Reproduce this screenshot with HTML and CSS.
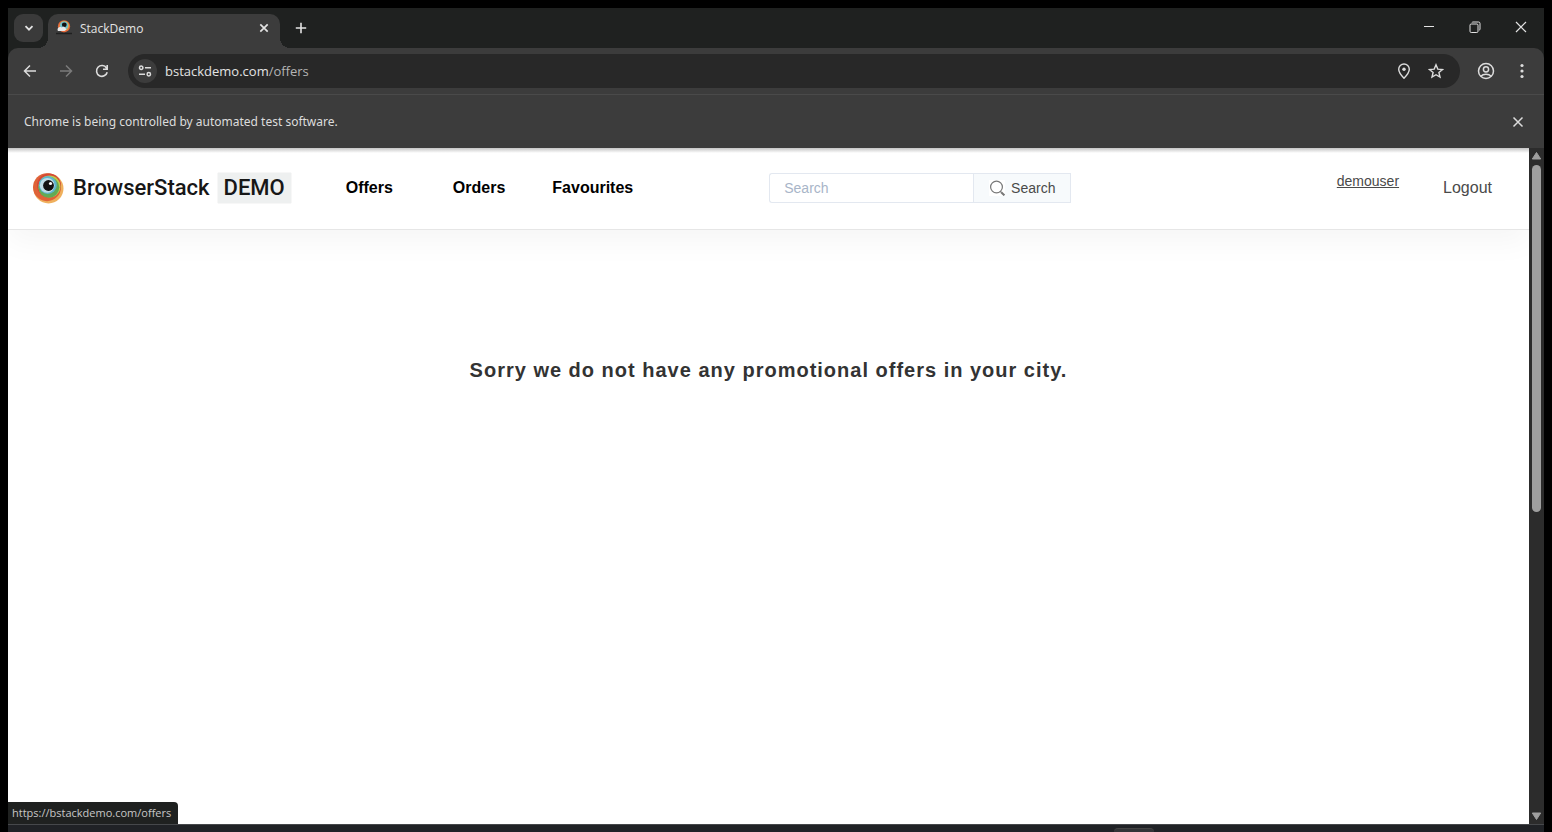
FILE: index.html
```html
<!DOCTYPE html>
<html lang="en">
<head>
<meta charset="utf-8">
<title>StackDemo</title>
<link rel="stylesheet" href="styles.css">
</head>
<body>
<div class="window">
  <div class="tabstrip">
    <button class="tab-search" aria-label="Search tabs"><svg width="12" height="12" viewBox="0 0 12 12"><path d="M2.5 4.2 6 7.7 9.5 4.2" fill="none" stroke="#e3e3e3" stroke-width="1.8"/></svg></button>
    <div class="tab">
      <svg class="favicon" width="16" height="16" viewBox="0 0 16 16"><circle cx="8" cy="6.3" r="6.1" fill="#e5673a"/><circle cx="8.3" cy="5.8" r="4.8" fill="#d9a94a"/><circle cx="8" cy="5.5" r="4" fill="#6fc0cc"/><circle cx="8.3" cy="4.8" r="2.4" fill="#111"/><path d="M1.500 10c0-2.500 2-3.500 4-2.500L8 6.500l2.500 3-2 1.500H2z" fill="#e8e8e8"/><path d="M0 13.500h16" stroke="#202020" stroke-width="1.500"/></svg>
      <span class="tab-title">StackDemo</span>
      <button class="tab-close" aria-label="Close tab"><svg width="10" height="10" viewBox="0 0 10 10"><path d="m1.300 1.300 7.400 7.400m0-7.400L1.300 8.700" stroke="#e3e3e3" stroke-width="1.700"/></svg></button>
    </div>
    <button class="tab-new" aria-label="New tab"><svg width="12" height="12" viewBox="0 0 12 12"><path d="M6 .8v10.400M.8 6h10.400" stroke="#e3e3e3" stroke-width="1.600"/></svg></button>
    <div class="window-buttons">
      <button aria-label="Minimize"><svg width="12" height="12" viewBox="0 0 12 12"><path d="M1 5.500h10" stroke="#e3e3e3"/></svg></button>
      <button aria-label="Restore"><svg width="12" height="12" viewBox="0 0 12 12"><rect x="1" y="3" width="8" height="8.500" rx="1.200" fill="none" stroke="#e3e3e3"/><path d="M3 1.500Q3 1 4 1h5.500Q11 1 11 2.500V8q0 1-.8 1.300" fill="none" stroke="#e3e3e3"/></svg></button>
      <button aria-label="Close"><svg width="12" height="12" viewBox="0 0 12 12"><path d="m1 1 10 10M11 1 1 11" stroke="#e3e3e3" stroke-width="1.200"/></svg></button>
    </div>
  </div>
  <div class="toolbar">
    <div class="history">
      <button aria-label="Back"><svg width="14" height="14" viewBox="0 0 14 14"><path d="M13 7H1.800M7 1.500 1.500 7 7 12.500" fill="none" stroke="#dcdcdc" stroke-width="1.500"/></svg></button>
      <button aria-label="Forward" disabled><svg width="14" height="14" viewBox="0 0 14 14"><path d="M1 7h11.200M7 1.500 12.500 7 7 12.500" fill="none" stroke="#7b7b7b" stroke-width="1.500"/></svg></button>
      <button aria-label="Reload"><svg width="14" height="14" viewBox="0 0 14 14"><path d="M12.200 8.200A5.400 5.400 0 1 1 11.500 4L12 4.800M12.200 1v4.300H8" fill="none" stroke="#dcdcdc" stroke-width="1.600"/></svg></button>
    </div>
    <div class="omnibox">
      <button class="site-info" aria-label="View site information"><svg width="14" height="14" viewBox="0 0 14 14"><g fill="none" stroke="#dcdcdc" stroke-width="1.500"><circle cx="3.200" cy="3.700" r="1.700"/><path d="M7 3.700h6M1 10.300h6"/><circle cx="10.800" cy="10.300" r="1.700"/></g></svg></button>
      <span class="url">bstackdemo.com<span class="url-path">/offers</span></span>
      <button class="omni-icon" aria-label="Location"><svg width="16" height="16" viewBox="0 0 16 16"><path d="M8 15.300C4.800 12 2.700 9.200 2.700 6.300a5.300 5.300 0 0 1 10.600 0C13.300 9.200 11.200 12 8 15.300z" fill="none" stroke="#dcdcdc" stroke-width="1.400"/><circle cx="8" cy="6.200" r="1.700" fill="#dcdcdc"/></svg></button>
      <button class="omni-icon" aria-label="Bookmark"><svg width="16" height="16" viewBox="0 0 16 16"><path d="m8 1.800 1.800 4.300 4.700.4-3.600 3 1.100 4.600L8 11.700l-4 2.400 1.100-4.600-3.600-3 4.700-.4z" fill="none" stroke="#dcdcdc" stroke-width="1.400"/></svg></button>
    </div>
    <button class="bar-icon profile" aria-label="Profile"><svg width="18" height="18" viewBox="0 0 18 18"><g fill="none" stroke="#dcdcdc" stroke-width="1.500"><circle cx="9" cy="9" r="7.500"/><circle cx="9" cy="7.300" r="2.600"/><path d="M3.800 14.300c2.500-2.700 7.900-2.700 10.400 0"/></g></svg></button>
    <button class="bar-icon" aria-label="Menu"><svg width="16" height="16" viewBox="0 0 16 16" fill="#dcdcdc"><circle cx="8" cy="2.500" r="1.600"/><circle cx="8" cy="8" r="1.600"/><circle cx="8" cy="13.500" r="1.600"/></svg></button>
  </div>
  <div class="infobar">
    <span>Chrome is being controlled by automated test software.</span>
    <button aria-label="Dismiss"><svg width="12" height="12" viewBox="0 0 12 12"><path d="m1.500 1.500 9 9m0-9-9 9" stroke="#dcdcdc" stroke-width="1.500"/></svg></button>
  </div>
  <div class="viewport">
    <div class="page">
      <header class="site-header">
        <a class="brand" href="#">
          <svg width="32" height="32" viewBox="0 0 32 32"><circle cx="16.500" cy="16.500" r="15" fill="#efb05d"/><circle cx="15" cy="15.200" r="14" fill="#df6338"/><circle cx="17" cy="13.500" r="12" fill="#d44838"/><circle cx="17.500" cy="14.500" r="11" fill="#bdca48"/><circle cx="16.800" cy="15.300" r="10.500" fill="#63aa55"/><circle cx="15.800" cy="13" r="9" fill="#5fb6cf"/><circle cx="15.200" cy="13.300" r="7.400" fill="#c0dde7"/><circle cx="16.500" cy="13.500" r="5.400" fill="#121212"/><circle cx="18.500" cy="11.500" r="1.600" fill="#fff"/></svg>
          <span class="brand-name">BrowserStack</span>
          <span class="brand-tag">DEMO</span>
        </a>
        <nav class="links">
          <a class="link-offers" href="#">Offers</a>
          <a class="link-orders" href="#">Orders</a>
          <a href="#">Favourites</a>
        </nav>
        <form class="search">
          <input type="text" placeholder="Search" aria-label="Search">
          <button type="button"><svg width="16" height="16" viewBox="0 0 16 16"><path d="M0 0h16v16H0z" fill="#fff"/><circle cx="7.500" cy="7" r="5.900" fill="none" stroke="#777" stroke-width="1.200"/><path d="m11.300 11.300 1 1" stroke="#777" stroke-width="1.200"/><path d="m12.200 12.200 3.200 3.200" stroke="#777" stroke-width="2"/></svg>Search</button>
        </form>
        <div class="account">
          <a class="user" href="#">demouser</a>
          <a class="logout" href="#">Logout</a>
        </div>
      </header>
      <main class="offers"><h1>Sorry we do not have any promotional offers in your city.</h1></main>
      <div class="status">https://bstackdemo.com/offers</div>
    </div>
    <div class="scrollbar">
      <svg width="11" height="10" viewBox="0 0 11 10"><path d="M5.500 1.500 9.700 8H1.300z" fill="#9f9f9f" stroke="#9f9f9f" stroke-linejoin="round"/></svg>
      <div class="track"><div class="thumb"></div></div>
      <svg width="11" height="10" viewBox="0 0 11 10"><path d="M5.500 8.500 9.700 2H1.300z" fill="#9f9f9f" stroke="#9f9f9f" stroke-linejoin="round"/></svg>
    </div>
  </div>
  <div class="taskbar"><div class="taskbar-item"></div></div>
</div>
</body>
</html>
```
FILE: styles.css
```css
* { box-sizing: border-box; }
body { margin: 0; background: #000; font-family: "Noto Sans", sans-serif; }
button { border: 0; padding: 0; background: none; font: inherit; display: flex; align-items: center; justify-content: center; flex: none; }
a { color: inherit; text-decoration: none; }
svg { display: block; flex: none; }

.window { min-height: 100vh; padding: 8px 8px 0; display: flex; flex-direction: column; }

.tabstrip { position: relative; z-index: 1; height: 40px; background: #1f2120; display: flex; padding-left: 6px; color: #e3e3e3; font-size: 12px; }
.tab-search { width: 29px; height: 28px; margin-top: 6px; border-radius: 9px; background: #3a3a3a; }
.tab { position: relative; width: 232px; height: 34px; margin: 6px 0 0 5px; padding: 0 10px 6px 8px; border-radius: 10px 10px 0 0; background: #3c3c3c; display: flex; align-items: center; }
.tab::before, .tab::after { content: ""; position: absolute; bottom: 0; width: 10px; height: 10px; }
.tab::before { left: -10px; background: radial-gradient(circle at 0 0, transparent 10px, #3c3c3c 10px); }
.tab::after { right: -10px; background: radial-gradient(circle at 100% 0, transparent 10px, #3c3c3c 10px); }
.tab-title { flex: 1; margin-left: 8px; font-family: "Open Sans", sans-serif; }
.tab-close { width: 12px; height: 16px; }
.tab-new { width: 28px; height: 28px; margin: 6px 0 0 7px; }
.window-buttons { margin-left: auto; display: flex; }
.window-buttons button { width: 46px; height: 38px; }

.toolbar { position: relative; height: 46px; padding: 0 8px; border-radius: 10px 10px 0 0; background: #3c3c3c; display: flex; align-items: center; }
.toolbar::before { content: ""; position: absolute; inset: 0 0 auto; height: 10px; z-index: -1; background: #1f2120; }
.history { display: flex; gap: 8px; }
.history button { width: 28px; height: 28px; }
.omnibox { flex: 1; height: 34px; margin-left: 12px; padding: 0 12px 0 5px; border-radius: 17px; background: #282828; display: flex; align-items: center; }
.site-info { width: 24px; height: 24px; border-radius: 50%; background: #3c3c3c; }
.url { flex: 1; margin-left: 8px; color: #e3e3e3; font: 13px/20px "Open Sans", sans-serif; }
.url-path { color: #b4b4b4; }
.omni-icon { width: 24px; height: 24px; margin-left: 8px; }
.bar-icon { width: 28px; height: 28px; }
.profile { margin: 0 8px 0 12px; }

.infobar { height: 54px; padding: 0 20px 0 16px; border-top: 1px solid #4a4a4a; background: #3c3c3c; color: #dcdcdc; font-size: 12px; display: flex; align-items: center; justify-content: space-between; }

.viewport { flex: 1; display: flex; background: #fff; }
.page { position: relative; flex: 1; overflow: hidden; display: flex; flex-direction: column; font-family: "Liberation Sans", sans-serif; background: linear-gradient(#c4c4c4, #fff 5px); }
.site-header { min-height: 82px; padding: 0 37px 2px 24px; border-bottom: 1px solid #e6e6e6; box-shadow: 0 12px 30px rgba(0, 0, 0, .04); display: flex; align-items: center; color: #000; }
.brand { display: flex; align-items: center; color: #171717; font: 500 22px/30px Roboto, sans-serif; }
.brand-name { margin-left: 9px; }
.brand-tag { margin-left: 8px; padding: 0 6px; background: #eef0f0; box-shadow: 0 0 1px #ccc; }
.links { margin-left: 55px; display: flex; font-weight: 700; font-size: 16px; line-height: 24px; }
.link-offers { margin-right: 60px; }
.link-orders { margin-right: 47px; }
.search { margin-left: 136px; display: flex; height: 30px; font-size: 14px; }
.search input { width: 204px; padding: 0 14px; border: 1px solid #e3e8f0; border-right: 0; border-radius: 3px 0 0 3px; background: #fff; font: inherit; color: #444; }
.search input::placeholder { color: #a8b5c8; }
.search button { width: 98px; gap: 6px; border: 1px solid #e3e8f0; background: #f7fafc; color: #4a4a4a; }
.account { margin-left: auto; display: flex; align-items: flex-start; gap: 44px; color: #4a4a4a; }
.user { font-size: 14px; line-height: 14px; text-decoration: underline; }
.logout { font-size: 16px; line-height: 28px; }
.offers { padding: 124px 0 0; text-align: center; }
.offers h1 { margin: 0; color: #333; font-size: 20px; line-height: 32px; letter-spacing: 1px; }
.status { position: absolute; left: 0; bottom: 0; height: 22px; padding: 0 7px 0 4px; border-radius: 0 4px 0 0; background: #1f2120; color: #c7c7c7; font: 11px/22px "Open Sans", sans-serif; }

.scrollbar { width: 15px; padding: 3px 0; background: #2c2c2c; display: flex; flex-direction: column; align-items: center; }
.track { flex: 1; width: 9px; padding: 4px 0; }
.thumb { height: 54%; min-height: 347px; border-radius: 5px; background: #9f9f9f; }
.taskbar { height: 8px; border-top: 1px solid #46484b; background: #202226; overflow: hidden; }
.taskbar-item { width: 40px; height: 10px; margin: 3px 0 0 72%; border-top: 1px solid #444; border-radius: 4px; background: #333437; }
```
